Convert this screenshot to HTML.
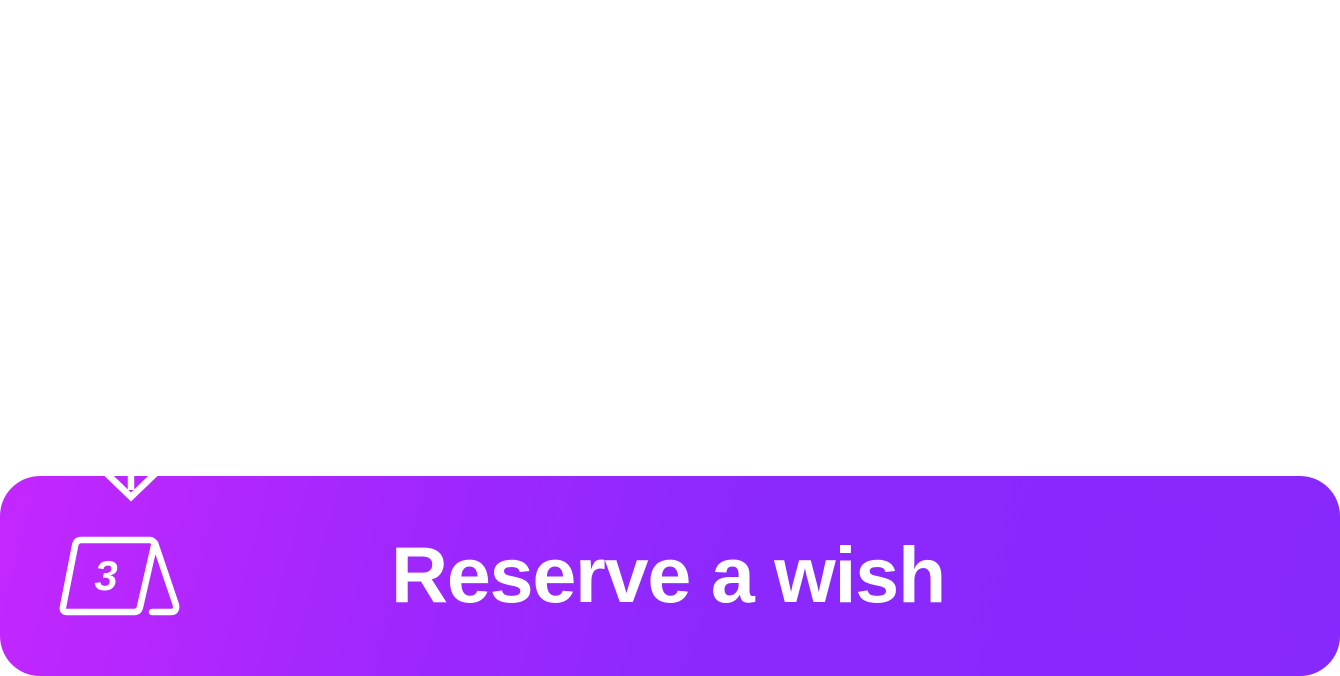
<!DOCTYPE html>
<html><head><style>
html,body{margin:0;padding:0;width:1340px;height:676px;background:#fff;overflow:hidden}
.card{position:absolute;left:0;top:476px;width:1340px;height:200px;border-radius:40px;background:linear-gradient(105deg,#c427fe 0%,#a027fe 30%,#8b28fe 55%,#8728fd 100%)}
.t{position:absolute;left:391px;top:527px;font-family:"Liberation Sans",sans-serif;font-weight:bold;font-size:79px;line-height:96px;color:#fff;letter-spacing:-1.2px;white-space:nowrap}
svg{position:absolute;left:0;top:0}
</style></head><body>
<div class="card"></div>
<svg width="1340" height="676">
<g fill="none" stroke="#fff" stroke-width="6.5" stroke-linejoin="round" stroke-linecap="round">
<polyline points="104,471 131,497 158,471" stroke-linejoin="miter"/>
<line x1="131" y1="476" x2="131" y2="490" stroke-linecap="butt"/>
<path d="M81,540 H149 Q155,540 154,546 L140,607 Q139,612 134,612 H67 Q62,612 63,607 L75,546 Q76,540 81,540 Z"/>
<path d="M155,543 L176,605 Q177,612 171,612 H152"/>
</g>
<text x="106" y="590" font-family="Liberation Sans,sans-serif" font-weight="bold" font-style="italic" font-size="42" fill="#fff" text-anchor="middle">3</text>
</svg>
<div class="t">Reserve a wish</div>
</body></html>
